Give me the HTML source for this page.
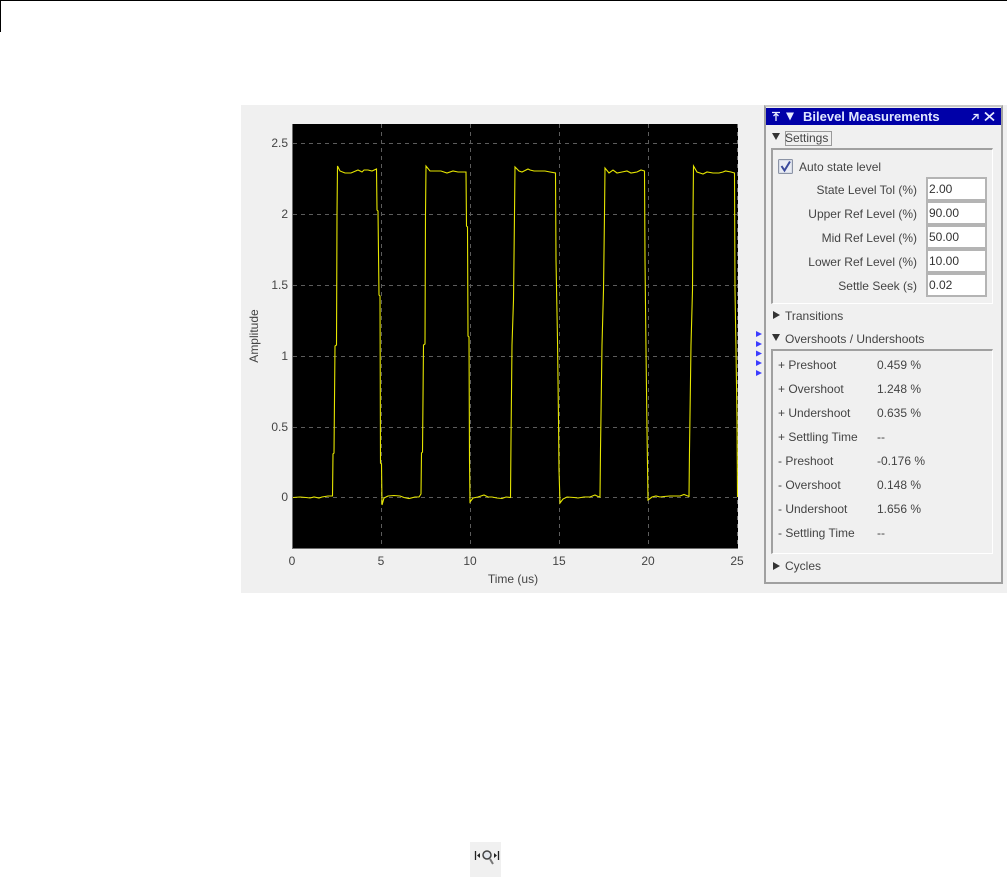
<!DOCTYPE html>
<html><head><meta charset="utf-8"><style>
html,body{margin:0;padding:0;background:#fff}
body{width:1007px;height:877px;position:relative;overflow:hidden;font-family:"Liberation Sans",sans-serif;font-size:12px;color:#444}
div,span{position:absolute;box-sizing:border-box}
.t{white-space:nowrap;line-height:14px;height:14px}
.r{text-align:right}
.c{text-align:center}
.i{left:926px;width:61px;height:24px;background:#fff;border:2px solid #b4b4b4;line-height:20px;padding-left:1px;color:#333;font-size:12px}
svg{position:absolute;left:0;top:0}
</style></head><body>
<div style="left:0;top:0;width:1007px;height:1px;background:#000"></div>
<div style="left:0;top:0;width:1px;height:32px;background:#000"></div>

<div style="left:241px;top:105px;width:766px;height:488px;background:#f0f0f0"></div>
<div style="left:292px;top:124px;width:446px;height:425px;background:#000"></div>

<svg width="1007" height="877" viewBox="0 0 1007 877">
<g stroke="#5c5c5c" stroke-width="1" stroke-dasharray="4 4" fill="none">
<path d="M293 143.5H738M293 214.5H738M293 285.5H738M293 356.5H738M293 427.5H738M293 497.5H738"/>
<path d="M381.5 124V548M470.5 124V548M559.5 124V548M648.5 124V548"/>
</g>
<path d="M292.5 124V548.5H738" stroke="#6e6e6e" fill="none"/>
<path d="M737.5 124V548" stroke="#6e6e6e" fill="none" stroke-dasharray="4 4"/>
<path fill="none" stroke="#e6e600" stroke-width="1.1" d="M293 497.5L300 497L306 497.5L310 498L314 497L319 498L322 497L328 496L332.5 496L333 454L334 453L335 346L336.5 345L337 214L337.5 166L340 171L345 173L351 173L358 170L362 172L364 170L368 170L372 171L376.5 169L377 210L378 211L379 295L380 296L380.5 463L381.5 464L382 505L384 498L388 496L394 495.5L400 496L404 497.5L409 498.5L415 497L419 497L421 494L421.5 453L422.5 452L423.5 345L425 344L425.5 214L426 166L430 171L437 171L441 171L447 173L453 171L458 172L466 172L466.5 226L467.5 227L468 336L469 337L469.5 460L470 502L473 498L478 497L484 495L488 497L492 497L497 498L502 498.5L506 497L510.5 497.5L511 440L512 345L513.5 300L514.5 214L515 167L519 171L522 172L528 169L530 170L534 171L538 171L545 171L550 172L555.5 173L556 260L557.5 340L558.5 420L559 470L560 503L563 499L567 497L574 497.5L578 498L584 497L590 497L595 495L598 496.5L600 497L600.5 450L602 345L603.5 290L604.5 214L605 168L609 173L613 170L617 173L622 172L627 171L631 173L637 172L641 170L644.5 171L645 260L646 350L647 430L648 500L652 497L656 496L660 497L664 496.5L670 496L676 496L680 496L684 494.5L689 496.5L689.5 450L691 345L692.5 290L693 214L693.5 166L697 172L700 173L703 174L707 172L713 173L719 173L723 172L725.5 171L731 172L734.5 173L735 290L736 350L737 420L737.5 497"/>
<g fill="#3c3cff"><path d="M756 331v6l6-3zM756 341v6l6-3zM756 350.500v6l6-3zM756 360v6l6-3zM756 370v6l6-3z"/></g>
</svg>

<!-- Y ticks -->
<div class="t r" style="left:258px;width:30px;top:136px">2.5</div>
<div class="t r" style="left:258px;width:30px;top:207px">2</div>
<div class="t r" style="left:258px;width:30px;top:278px">1.5</div>
<div class="t r" style="left:258px;width:30px;top:349px">1</div>
<div class="t r" style="left:258px;width:30px;top:420px">0.5</div>
<div class="t r" style="left:258px;width:30px;top:490px">0</div>
<!-- X ticks -->
<div class="t c" style="left:272px;width:40px;top:554px">0</div>
<div class="t c" style="left:361px;width:40px;top:554px">5</div>
<div class="t c" style="left:450px;width:40px;top:554px">10</div>
<div class="t c" style="left:539px;width:40px;top:554px">15</div>
<div class="t c" style="left:628px;width:40px;top:554px">20</div>
<div class="t c" style="left:717px;width:40px;top:554px">25</div>
<div class="t c" style="left:463px;width:100px;top:572px">Time (us)</div>
<div class="t c" style="left:204px;width:100px;top:329px;transform:rotate(-90deg)">Amplitude</div>

<!-- Measurements panel -->
<div style="left:764px;top:105px;width:239px;height:479px;background:#f0f0f0;border:2px solid #a0a0a0;border-top-color:#c8c8c8"></div>
<div style="left:766px;top:108px;width:235px;height:17px;background:#0000a8"></div>
<div class="t" style="left:803px;top:110px;color:#dfe6ff;font-weight:bold;font-size:13px">Bilevel Measurements</div>
<svg width="1007" height="877" viewBox="0 0 1007 877">
<g stroke="#e8ecff" stroke-width="1.300" fill="none">
<path d="M772 112.500H780M776 113V121M773.500 116L776 113.500L778.500 116"/>
<path d="M972 120L977 115M973.500 114.500H978V119"/>
<path d="M985 112.500L994 120.500M994 112.500L985 120.500" stroke-width="1.800"/>
</g>
<path d="M786 112.500h8l-4 8z" fill="#e8ecff"/>
<path d="M772 133h8l-4 7zM772 334h8l-4 7z" fill="#333"/>
<path d="M773 311v8l7-4zM773 562v8l7-4z" fill="#333"/>
<rect x="785.500" y="131.500" width="46" height="14" fill="none" stroke="#444" stroke-dasharray="1 1"/>
<!-- check box -->
<rect x="778.500" y="159.500" width="14" height="14" rx="1" fill="#d8dde8" stroke="#8b93a5"/>
<rect x="780" y="161" width="11" height="11" fill="#e9ecf4"/>
<path d="M781.500 166L784.500 170.500L790 161.500" fill="none" stroke="#3a4a9c" stroke-width="2"/>
</svg>
<div class="t" style="left:785px;top:131px">Settings</div>
<div style="left:771px;top:148px;width:222px;height:156px;border:1px solid #fff;border-top:2px solid #a0a0a0;border-left:2px solid #a0a0a0"></div>
<div class="t" style="left:799px;top:160px">Auto state level</div>

<div class="t r" style="left:760px;width:157px;top:183px">State Level Tol (%)</div>
<div class="t r" style="left:760px;width:157px;top:207px">Upper Ref Level (%)</div>
<div class="t r" style="left:760px;width:157px;top:231px">Mid Ref Level (%)</div>
<div class="t r" style="left:760px;width:157px;top:255px">Lower Ref Level (%)</div>
<div class="t r" style="left:760px;width:157px;top:279px">Settle Seek (s)</div>
<div class="i" style="top:177px">2.00</div>
<div class="i" style="top:201px">90.00</div>
<div class="i" style="top:225px">50.00</div>
<div class="i" style="top:249px">10.00</div>
<div class="i" style="top:273px">0.02</div>

<div class="t" style="left:785px;top:309px">Transitions</div>
<div class="t" style="left:785px;top:332px">Overshoots / Undershoots</div>
<div style="left:771px;top:349px;width:222px;height:205px;border:1px solid #fff;border-top:2px solid #a0a0a0;border-left:2px solid #a0a0a0"></div>

<div class="t" style="left:778px;top:358px">+ Preshoot</div><div class="t" style="left:877px;top:358px">0.459 %</div>
<div class="t" style="left:778px;top:382px">+ Overshoot</div><div class="t" style="left:877px;top:382px">1.248 %</div>
<div class="t" style="left:778px;top:406px">+ Undershoot</div><div class="t" style="left:877px;top:406px">0.635 %</div>
<div class="t" style="left:778px;top:430px">+ Settling Time</div><div class="t" style="left:877px;top:430px">--</div>
<div class="t" style="left:778px;top:454px">- Preshoot</div><div class="t" style="left:877px;top:454px">-0.176 %</div>
<div class="t" style="left:778px;top:478px">- Overshoot</div><div class="t" style="left:877px;top:478px">0.148 %</div>
<div class="t" style="left:778px;top:502px">- Undershoot</div><div class="t" style="left:877px;top:502px">1.656 %</div>
<div class="t" style="left:778px;top:526px">- Settling Time</div><div class="t" style="left:877px;top:526px">--</div>
<div class="t" style="left:785px;top:559px">Cycles</div>

<!-- bottom icon -->
<div style="left:470px;top:842px;width:31px;height:35px;background:#f0f0f0"></div>
<svg width="1007" height="877" viewBox="0 0 1007 877">
<g fill="none" stroke="#222">
<path d="M475.500 851V860M498.500 851V860" stroke-width="1.300"/>
<circle cx="487" cy="855" r="4" stroke="#444" stroke-width="1.500" fill="#e4e8ee"/>
<path d="M490 859L493 864" stroke="#777" stroke-width="2"/>
</g>
<path d="M477 855.500l3-2.500v5zM497 855.500l-3-2.500v5z" fill="#222"/>
</svg>
</body></html>
